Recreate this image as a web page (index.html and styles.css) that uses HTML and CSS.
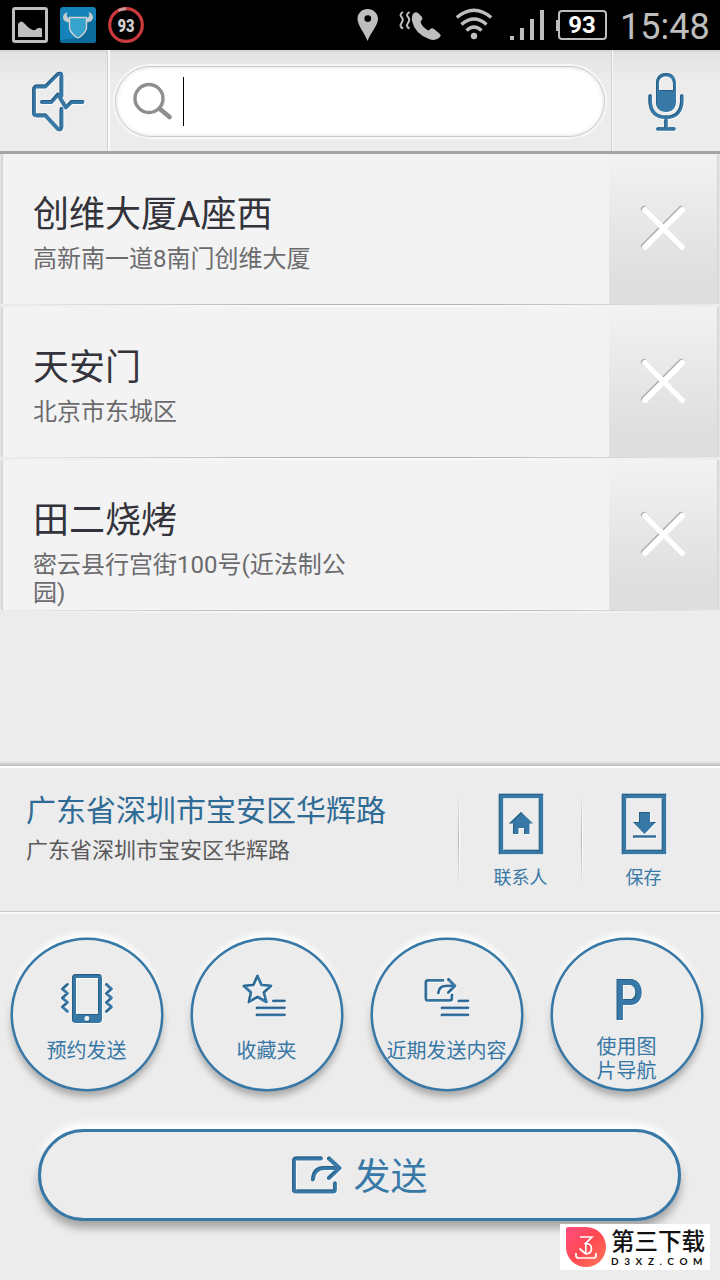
FILE: index.html
```html
<!DOCTYPE html>
<html lang="zh-CN">
<head>
  <meta charset="UTF-8" />
  <meta name="viewport" content="width=device-width, initial-scale=1.0"/>
  <title>发送位置</title>
  <link rel="stylesheet" href="styles.css">
</head>
<body>

  <!-- Filtro y degradado compartidos por los iconos -->
  <svg class="defs" width="0" height="0">
    <defs>
      <filter id="relieve" x="-10%" y="-10%" width="120%" height="120%">
        <feOffset in="SourceAlpha" dx="1.3" dy="1.3" result="off"/>
        <feComposite in="SourceAlpha" in2="off" operator="out" result="edge"/>
        <feFlood flood-color="#1f4f73" flood-opacity="0.7"/>
        <feComposite in2="edge" operator="in" result="shade"/>
        <feMerge><feMergeNode in="SourceGraphic"/><feMergeNode in="shade"/></feMerge>
      </filter>
      <linearGradient id="rojo" x1="0" y1="0" x2="1" y2="1">
        <stop offset="0" stop-color="#ff4d80"/>
        <stop offset="0.5" stop-color="#ff4850"/>
        <stop offset="1" stop-color="#ff7a5c"/>
      </linearGradient>
    </defs>
  </svg>

  <!-- Barra de estado -->
  <div class="status-bar">
    <svg width="36" height="36" viewBox="0 0 36 36">
      <rect x="1.5" y="1.5" width="33" height="33" rx="1.5" fill="none" stroke="#bebebe" stroke-width="3"/>
      <path d="M6 30V17q3-5 7 0q6 7 10 6q5-4 7-1v8z" fill="#bebebe"/>
    </svg>
    <svg width="36" height="36" viewBox="0 0 36 36">
      <rect width="36" height="36" rx="3" fill="#1583b8"/>
      <path d="M0 33L18 31L31 9L36 14V33q0 3-3 3H3q-3 0-3-3z" fill="#0b6c9c"/>
      <path d="M9.5 10.500h17v11q-2 6-8.500 9.500q-6.500-3.500-8.500-9.500z" fill="#35a3cc" stroke="#d2d2d2" stroke-width="1.400"/>
      <path d="M7.500 5q-5 2-4.500 6q1 4 6 4.500v-4q-3.500-2-1.500-6.500zM28.500 5q5 2 4.500 6q-1 4-6 4.500v-4q3.500-2 1.500-6.500z" fill="#c4ccd0"/>
    </svg>
    <svg width="36" height="36" viewBox="0 0 36 36">
      <circle cx="18" cy="18" r="16.300" fill="none" stroke="#cb3b3e" stroke-width="3.200"/>
      <path d="M10.500 3.500A16.300 16.300 0 0 1 18 1.700" fill="none" stroke="#c89a98" stroke-width="3"/>
      <text x="9.500" y="24.500" class="badge-num" textLength="17" lengthAdjust="spacingAndGlyphs">93</text>
    </svg>

    <div class="status-right">
      <svg width="22" height="34" viewBox="0 0 22 34">
        <path fill-rule="evenodd" d="M10.500 1C4.500 1 .5 5.500.5 11c0 6 6.500 13 10 22C14 24 21 17 21 11 21 5.500 16.500 1 10.500 1zm.3 6.200a3.400 3.400 0 1 1 0 6.800a3.400 3.400 0 0 1 0-6.800z" fill="#bebebe"/>
      </svg>
      <svg class="icon-call" width="44" height="32" viewBox="0 0 44 32">
        <path d="M4 3q-4 2.500-1.500 5t0 6t1.500 5.500M10.500 3q-4 2.500-1.500 5t0 6t1.500 5.500" fill="none" stroke="#bebebe" stroke-width="2"/>
        <path d="M14 5q2-3 5-1l4 4q1 2-.5 3.500l-1 1q1 5 7.500 9q1.500-.5 3-2q1.500-.5 3 .5l6 5q1.500 1.500 0 3q-4 4.500-11 2q-14-5-17-18q-.5-5 1-7z" fill="#bebebe"/>
      </svg>
      <svg class="icon-wifi" width="36" height="32" viewBox="0 0 36 32">
        <g fill="none" stroke="#bebebe" stroke-width="3.400">
          <path d="M.8 8.500Q18-6 35.200 8.500"/>
          <path d="M5.500 15.500Q18 4.500 30.500 15.500"/>
          <path d="M10.500 21.500Q18 14.500 25.500 21.500"/>
        </g>
        <circle cx="18" cy="27" r="3.200" fill="#bebebe"/>
      </svg>
      <svg class="icon-signal" width="34" height="30" viewBox="0 0 34 30">
        <path d="M0 26h4v4H0zM10 18h4v12h-4zM20 9h4v21h-4zM30 0h4v30h-4z" fill="#bebebe"/>
      </svg>
      <svg class="icon-battery" width="51" height="30" viewBox="0 0 51 30">
        <rect x="3" y="1" width="47" height="28" rx="3" fill="none" stroke="#bebebe" stroke-width="2"/>
        <path d="M0 10h3v11H0z" fill="#bebebe"/>
        <text x="26" y="23" class="battery-num" text-anchor="middle">93</text>
      </svg>
      <span class="clock">15:48</span>
    </div>
  </div>

  <!-- Buscador -->
  <div class="toolbar">
    <div class="tool-btn">
      <svg class="icon" width="54" height="62" viewBox="0 0 54 62">
        <g class="trazo" stroke-width="3.800" filter="url(#relieve)">
          <path d="M30.500 25V5q0-3.500-3.500-2L14.500 15.500H6q-3 0-3 3v23q0 3 3 3h8.500L27 58q3.500 1.500 3.500-2V38"/>
          <path d="M11 31h9.500l6.500-7.500l8 13l5.500-5.500h11"/>
        </g>
      </svg>
    </div>
    <div class="search-wrap">
      <div class="search-box">
        <svg width="40" height="38" viewBox="0 0 40 38">
          <circle cx="16" cy="15.500" r="14" fill="none" stroke="#8e8e8e" stroke-width="3.400"/>
          <path d="M27 26l9.500 8" stroke="#8e8e8e" stroke-width="4.600" stroke-linecap="round"/>
        </svg>
        <span class="cursor"></span>
      </div>
    </div>
    <div class="tool-btn">
      <svg class="icon" width="36" height="60" viewBox="0 0 36 60">
        <g filter="url(#relieve)">
          <path fill-rule="evenodd" d="M18 1C12 1 8 5 8 11v19c0 6 4 10 10 10s10-4 10-10V11C28 5 24 1 18 1zM11 18v-6.500C11 7 14 4.500 18 4.500S25 7 25 11.500V18z" fill="#3878a6"/>
          <path class="trazo" d="M2.200 24v6q1 15 15.800 15.500q14.800-.5 15.800-15.500v-6M18 45v11M10 57h16" stroke-width="3.600"/>
        </g>
      </svg>
    </div>
  </div>

  <!-- Lista de lugares -->
  <div class="lista">
    <div class="lugar">
      <div class="lugar-info">
        <h2>创维大厦A座西</h2>
        <p>高新南一道8南门创维大厦</p>
      </div>
      <button class="borrar">
        <svg width="46" height="46" viewBox="0 0 46 46"><path d="M5 4l37 37M42 4L5 41"/></svg>
      </button>
    </div>
    <div class="lugar">
      <div class="lugar-info">
        <h2>天安门</h2>
        <p>北京市东城区</p>
      </div>
      <button class="borrar">
        <svg width="46" height="46" viewBox="0 0 46 46"><path d="M5 4l37 37M42 4L5 41"/></svg>
      </button>
    </div>
    <div class="lugar">
      <div class="lugar-info">
        <h2>田二烧烤</h2>
        <p>密云县行宫街100号(近法制公园)</p>
      </div>
      <button class="borrar">
        <svg width="46" height="46" viewBox="0 0 46 46"><path d="M5 4l37 37M42 4L5 41"/></svg>
      </button>
    </div>
  </div>

  <!-- Dirección actual -->
  <div class="direccion">
    <div class="direccion-info">
      <h3>广东省深圳市宝安区华辉路</h3>
      <p>广东省深圳市宝安区华辉路</p>
    </div>
    <div class="accion">
      <svg class="icon" width="46" height="62" viewBox="0 0 46 62">
        <g filter="url(#relieve)">
          <rect x="3" y="3" width="40" height="56" fill="none" stroke="#3878a6" stroke-width="4.400"/>
          <path d="M23 19L35 30.500h-3.500V41H26v-6h-5.500v6H15V30.500h-4z" fill="#3878a6"/>
        </g>
      </svg>
      <span>联系人</span>
    </div>
    <div class="accion">
      <svg class="icon" width="46" height="62" viewBox="0 0 46 62">
        <g filter="url(#relieve)">
          <rect x="3" y="3" width="40" height="56" fill="none" stroke="#3878a6" stroke-width="4.400"/>
          <path d="M18 19h11v10h6L23.500 41L12 29h6zM12 42.500h23v2.200H12z" fill="#3878a6"/>
        </g>
      </svg>
      <span>保存</span>
    </div>
  </div>

  <!-- Botones redondos -->
  <div class="circulos">
    <div class="circulo">
      <svg class="icon" width="56" height="52" viewBox="0 0 56 52">
        <g filter="url(#relieve)">
          <path fill-rule="evenodd" d="M17 1h22q4 0 4 4v41q0 4-4 4H17q-4 0-4-4V5q0-4 4-4zM17 5v36h22V5zM28 43a2.500 2.500 0 1 0 0 5a2.500 2.500 0 0 0 0-5z" fill="#3878a6"/>
          <path class="trazo" d="M8.500 11.500L3.500 16l5 4.500L3.500 25l5 4.500L3.500 34l5 4.500M47.500 11.500L52.500 16l-5 4.500L52.500 25l-5 4.500L52.500 34l-5 4.500" stroke-width="2.600"/>
        </g>
      </svg>
      <span>预约发送</span>
    </div>
    <div class="circulo">
      <svg class="icon" width="48" height="52" viewBox="0 0 48 52">
        <g class="trazo" stroke-width="2.600" filter="url(#relieve)">
          <path d="M14.500 3l4.200 9L28 13l-7 6.500l2.500 9.500L14.500 24l-8.500 5l2-9.500l-7-6.500l9.500-1z"/>
          <path d="M30.500 28h11M14 35h27.500M14 42h27.500"/>
        </g>
      </svg>
      <span>收藏夹</span>
    </div>
    <div class="circulo">
      <svg class="icon" width="48" height="52" viewBox="0 0 48 52">
        <g class="trazo" stroke-width="2.600" filter="url(#relieve)">
          <path d="M20 7.500H5q-2 0-2 2v16q0 2 2 2h22q2 0 2-2V22"/>
          <path d="M15.500 20q.5-7 8-7H31M25.500 6.500L32 13l-6.500 6.500"/>
          <path d="M36 28h9M19 35h26M19 42h26"/>
        </g>
      </svg>
      <span>近期发送内容</span>
    </div>
    <div class="circulo circulo-p">
      <svg class="icon" width="48" height="52" viewBox="0 0 48 52">
        <text x="10.500" y="47" class="letra-p" filter="url(#relieve)" textLength="30" lengthAdjust="spacingAndGlyphs">P</text>
      </svg>
      <span>使用图<br>片导航</span>
    </div>
  </div>

  <!-- Enviar -->
  <button class="enviar">
    <svg class="icon" width="50" height="38" viewBox="0 0 50 38">
      <g class="trazo" stroke-width="3.800" filter="url(#relieve)">
        <path d="M29 2.500H4q-2 0-2 2v29q0 2 2 2h37q2 0 2-2V27.500"/>
        <path d="M21 23.500q.5-11.500 12-11.500H47M37 2.500L47.500 12.200L37 22"/>
      </g>
    </svg>
    <span>发送</span>
  </button>

  <!-- Marca flotante -->
  <div class="marca">
    <svg width="40" height="40" viewBox="0 0 40 40">
      <path d="M2 0h18a20 20 0 1 1-20 20V2q0-2 2-2z" fill="url(#rojo)"/>
      <path d="M14 10h12l-6.500 6.500q6 0 6 5t-5.500 5.500M19.800 17v10M13.500 21.500l6.300 5.500M10 26v2.500q0 2.500 2.500 2.500h15q2.500 0 2.500-2.500V26" fill="none" stroke="#fff" stroke-width="1.700"/>
    </svg>
    <div>
      <strong>第三下载</strong>
      <small>D3XZ.COM</small>
    </div>
  </div>

</body>
</html>
```
FILE: styles.css
```css
* { margin: 0; padding: 0; box-sizing: border-box; }

body {
  width: 720px;
  height: 1280px;
  display: flex;
  flex-direction: column;
  position: relative;
  overflow: hidden;
  font-family: Roboto, "Noto Sans CJK SC", sans-serif;
  background: #ececec;
  color: #33333b;
}

svg { display: block; flex-shrink: 0; overflow: visible; }

button {
  background: none;
  border: none;
  font-family: inherit;
  cursor: pointer;
}

.defs { position: absolute; }

.icon { filter: drop-shadow(1px 1px 0 #fafafa); }

.trazo {
  fill: none;
  stroke: #3878a6;
  stroke-linecap: round;
  stroke-linejoin: round;
}

/* barra de estado */
.status-bar {
  flex: none;
  height: 50px;
  background: #000;
  display: flex;
  align-items: center;
  gap: 12px;
  padding-left: 12px;
}

.status-right {
  display: flex;
  align-items: center;
  margin-left: 201px;
}

.icon-call { margin-left: 20px; }
.icon-wifi { margin-left: 13px; }
.icon-signal { margin-left: 18px; }
.icon-battery { margin-left: 12px; }

.badge-num {
  font-size: 18px;
  font-weight: 900;
  fill: #d0d0d0;
}

.battery-num {
  font-size: 24px;
  font-weight: 700;
  fill: #fff;
}

.clock {
  margin-left: 13px;
  font-size: 36px;
  line-height: 50px;
  color: #bebebe;
  padding-top: 3px;
}

/* buscador */
.toolbar {
  flex: none;
  height: 104px;
  display: flex;
  background: linear-gradient(#cfcfcf 0, #e3e3e3 3px, #ececec 30px);
  border-bottom: 3px solid #a2a4a3;
}

.tool-btn {
  width: 108px;
  display: flex;
  align-items: center;
  justify-content: center;
  padding: 2px 0 0 8px;
}

.tool-btn:last-child { padding-left: 0; }

.search-wrap {
  flex: 1;
  padding: 16px 6px 14px 5px;
  border-left: 2px solid #fafafa;
  border-right: 1px solid #cfcfcf;
  box-shadow: -1px 0 0 #cfcfcf, 1px 0 0 #fafafa;
}

.search-box {
  height: 71px;
  border-radius: 36px;
  background: #fff;
  border: 1px solid #c8c8c8;
  box-shadow: 0 0 0 2px #f7f7f7, inset 0 0 4px #ddd;
  display: flex;
  align-items: center;
  padding-left: 17px;
}

.cursor {
  width: 1px;
  height: 49px;
  margin-left: 10px;
  background: #000;
}

/* lista */
.lista {
  flex: none;
  height: 607px;
}

.lugar {
  height: 153px;
  display: flex;
  padding: 0 3px 3px;
  background:
    linear-gradient(90deg, #ececec, #b4b4b4 40%, #b4b4b4 65%, #ececec) 0 150px / 100% 1px no-repeat,
    linear-gradient(90deg, #ececec, #fafafa 40%, #fafafa 65%, #ececec) 0 151px / 100% 2px no-repeat,
    linear-gradient(90deg, #e8e8e8, #d0d0d0) 0 0 / 3px 100% no-repeat,
    linear-gradient(90deg, #d2d2d2, #e8e8e8) 100% 0 / 3px 100% no-repeat;
}

.lugar-info {
  flex: 1;
  padding: 39px 0 0 30px;
  background: #f3f3f3;
}

.lugar h2 {
  font-size: 36px;
  font-weight: 400;
  line-height: 44px;
  color: #33333b;
}

.lugar p {
  width: 322px;
  margin-top: 8px;
  font-size: 24px;
  line-height: 28px;
  color: #6b6b6e;
}

.borrar {
  width: 108px;
  display: flex;
  align-items: center;
  justify-content: center;
  background: linear-gradient(#f2f2f2, #dedede 85%);
}

.borrar path {
  fill: none;
  stroke: #fff;
  stroke-width: 6;
  stroke-linecap: round;
}

.borrar svg { filter: drop-shadow(-1px -1px 0.5px #aaa); }

/* direccion */
.direccion {
  flex: none;
  height: 151px;
  display: flex;
  padding-top: 5px;
  background: linear-gradient(#ececec, #b9b9b9 5px, #fff 5px, #fff 7px, #ececec 7px);
  border-bottom: 1px solid #c6c6c6;
  box-shadow: 0 2px 0 #fafafa;
}

.direccion-info {
  width: 458px;
  padding: 25px 0 0 26px;
}

.direccion h3 {
  font-size: 30px;
  font-weight: 400;
  line-height: 40px;
  color: #2f6b95;
}

.direccion p {
  margin-top: 5px;
  font-size: 22px;
  line-height: 30px;
  color: #5a5a5a;
}

.accion {
  width: 123px;
  padding: 27px 0 0 2px;
  display: flex;
  flex-direction: column;
  align-items: center;
  background:
    linear-gradient(#ececec, #b5b5b5, #ececec) 0 25px / 1px 98px no-repeat,
    linear-gradient(#ececec, #fff, #ececec) 1px 25px / 1px 98px no-repeat;
}

.accion span {
  margin-top: 10px;
  font-size: 18px;
  line-height: 26px;
  color: #3878a6;
}

/* botones redondos */
.circulos {
  flex: none;
  display: flex;
  gap: 28px;
  padding: 26px 10.5px 0;
}

.circulo {
  width: 152px;
  height: 153px;
  border: 2px solid #3878a6;
  border-radius: 50%;
  background: #ececec;
  box-shadow: 0 0 0 0.5px #3878a6, 0 6px 7px rgba(0,0,0,0.28), 0 -5px 6px #fff;
  display: flex;
  flex-direction: column;
  align-items: center;
  padding-top: 33px;
}

.circulo span {
  margin-top: 14px;
  font-size: 20px;
  line-height: 24px;
  color: #3878a6;
  white-space: nowrap;
  text-align: center;
}

.circulo-p span { margin-top: 10px; }

.letra-p {
  font-size: 57px;
  font-weight: 600;
  fill: #3878a6;
}

/* enviar */
.enviar {
  flex: none;
  width: 643px;
  height: 92px;
  margin: 38px 0 0 38px;
  border: 3px solid #3878a6;
  border-radius: 46px;
  background: #ececec;
  box-shadow: 0 7px 8px rgba(0,0,0,0.3), 0 -6px 7px #fff;
  display: flex;
  align-items: center;
  justify-content: center;
  gap: 12px;
  color: #3878a6;
}

.enviar span {
  padding-top: 6px;
  font-size: 37px;
  line-height: 44px;
}

/* marca */
.marca {
  position: absolute;
  left: 560px;
  top: 1224px;
  width: 150px;
  height: 46px;
  padding-left: 6px;
  background: #fff;
  display: flex;
  align-items: center;
  gap: 5px;
  color: #111;
}

.marca strong {
  display: block;
  padding-top: 2px;
  font-size: 23.5px;
  font-weight: 500;
  line-height: 26px;
}

.marca small {
  display: block;
  font-family: Lato, sans-serif;
  font-size: 10px;
  font-weight: 700;
  line-height: 12px;
  letter-spacing: 5.6px;
  white-space: nowrap;
}
```
